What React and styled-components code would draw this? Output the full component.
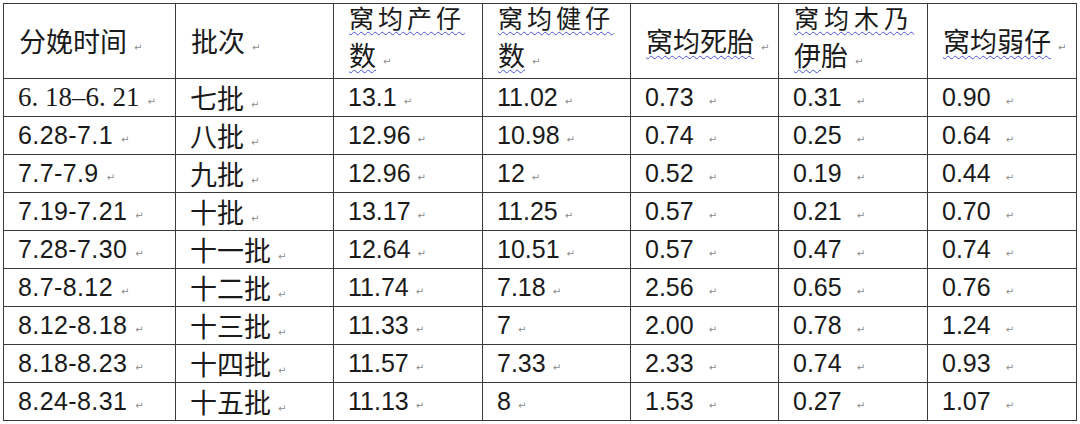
import React from 'react';
import styled, { createGlobalStyle } from 'styled-components';

const GlobalStyle = createGlobalStyle`
  html, body {
    margin: 0;
    padding: 0;
    background: #ffffff;
  }
  body {
    font-family: 'Liberation Sans', Arial, sans-serif;
    color: #1a1a1a;
  }
`;

const widths = [172, 158, 149, 148, 148, 149, 149];

const rows = [
  ['6. 18–6. 21', '七批', '13.1', '11.02', '0.73', '0.31', '0.90'],
  ['6.28-7.1', '八批', '12.96', '10.98', '0.74', '0.25', '0.64'],
  ['7.7-7.9', '九批', '12.96', '12', '0.52', '0.19', '0.44'],
  ['7.19-7.21', '十批', '13.17', '11.25', '0.57', '0.21', '0.70'],
  ['7.28-7.30', '十一批', '12.64', '10.51', '0.57', '0.47', '0.74'],
  ['8.7-8.12', '十二批', '11.74', '7.18', '2.56', '0.65', '0.76'],
  ['8.12-8.18', '十三批', '11.33', '7', '2.00', '0.78', '1.24'],
  ['8.18-8.23', '十四批', '11.57', '7.33', '2.33', '0.74', '0.93'],
  ['8.24-8.31', '十五批', '11.13', '8', '1.53', '0.27', '1.07'],
];

const App = () => {
  return (
    <Page>
      <GlobalStyle />
      <Table>
        <colgroup>
          {widths.map((w, i) => (
            <col key={i} style={{ width: w }} />
          ))}
        </colgroup>
        <thead>
          <tr>
            <HeadCell>
              <Han>分娩时间</Han>
              <Mark $gap={7}>↵</Mark>
            </HeadCell>
            <HeadCell>
              <Han>批次</Han>
              <Mark $gap={7}>↵</Mark>
            </HeadCell>
            <HeadCell>
              <Line>
                <Spread>
                  <Wavy>窝均产仔</Wavy>
                </Spread>
              </Line>
              <Line>
                <Han>
                  <Wavy>数</Wavy>
                </Han>
                <Mark $gap={7}>↵</Mark>
              </Line>
            </HeadCell>
            <HeadCell>
              <Line>
                <Spread>
                  <Wavy>窝均健仔</Wavy>
                </Spread>
              </Line>
              <Line>
                <Han>
                  <Wavy>数</Wavy>
                </Han>
                <Mark $gap={7}>↵</Mark>
              </Line>
            </HeadCell>
            <HeadCell>
              <Han>
                <Wavy>窝均死胎</Wavy>
              </Han>
              <Mark $gap={7}>↵</Mark>
            </HeadCell>
            <HeadCell>
              <Line>
                <Spread $space={5}>
                  <Wavy>窝均木乃</Wavy>
                </Spread>
              </Line>
              <Line>
                <Han>
                  <Wavy>伊</Wavy>胎
                </Han>
                <Mark $gap={7}>↵</Mark>
              </Line>
            </HeadCell>
            <HeadCell>
              <Han>
                <Wavy>窝均弱仔</Wavy>
              </Han>
              <Mark $gap={7}>↵</Mark>
            </HeadCell>
          </tr>
        </thead>
        <tbody>
          {rows.map((r, i) => (
            <tr key={i}>
              <Cell>
                {i === 0 ? <SerifDate>{r[0]}</SerifDate> : <DateText>{r[0]}</DateText>}
                <Mark $gap={8}>↵</Mark>
              </Cell>
              <Cell>
                <Han>{r[1]}</Han>
                <Mark $gap={7}>↵</Mark>
              </Cell>
              <Cell>
                <Num>{r[2]}</Num>
                <Mark $gap={7}>↵</Mark>
              </Cell>
              <Cell>
                <Num>{r[3]}</Num>
                <Mark $gap={7}>↵</Mark>
              </Cell>
              <Cell>
                <Num>{r[4]}</Num>
                <Mark $gap={15}>↵</Mark>
              </Cell>
              <Cell>
                <Num>{r[5]}</Num>
                <Mark $gap={15}>↵</Mark>
              </Cell>
              <Cell>
                <Num>{r[6]}</Num>
                <Mark $gap={15}>↵</Mark>
              </Cell>
            </tr>
          ))}
        </tbody>
      </Table>
    </Page>
  );
};

const Page = styled.div`
  padding: 3px 0 0 3px;
  width: 1080px;
  height: 424px;
  box-sizing: border-box;
  overflow: hidden;
`;

const Table = styled.table`
  border-collapse: collapse;
  table-layout: fixed;
  width: 1073px;
  border: 1px solid #2e2e2e;
`;

const HeadCell = styled.th`
  height: 74px;
  padding: 0 0 0 15px;
  border: 1px solid #3a3a3a;
  text-align: left;
  vertical-align: middle;
  font-weight: normal;
  white-space: nowrap;
  line-height: 1;
`;

const Cell = styled.td`
  height: 37px;
  padding: 0 0 0 14px;
  border: 1px solid #3a3a3a;
  vertical-align: middle;
  white-space: nowrap;
  line-height: 1;
`;

const Line = styled.div`
  height: 37px;
  line-height: 37px;
`;

const Han = styled.span`
  font-family: 'Noto Sans CJK SC', 'Noto Sans', sans-serif;
  font-size: 27px;
  line-height: 1;
  color: #1a1a1a;
`;

const Spread = styled(Han)`
  font-size: 25px;
  letter-spacing: ${props => props.$space || 4}px;
`;

const Wavy = styled.span`
  text-decoration: underline wavy #4456d8;
  text-decoration-thickness: 1px;
  text-underline-offset: 3px;
`;

const Num = styled.span`
  font-family: 'Liberation Sans', Arial, sans-serif;
  font-size: 25px;
  line-height: 1;
  color: #1a1a1a;
`;

const DateText = styled(Num)`
  letter-spacing: 0.4px;
`;

const SerifDate = styled.span`
  font-family: 'Liberation Serif', 'Times New Roman', serif;
  font-size: 27px;
  line-height: 1;
  color: #1a1a1a;
`;

const Mark = styled.span`
  margin-left: ${props => props.$gap || 7}px;
  font-family: 'DejaVu Sans', sans-serif;
  font-size: 10px;
  line-height: 1;
  vertical-align: 1px;
  color: #8c8c8c;
`;

export default App;
